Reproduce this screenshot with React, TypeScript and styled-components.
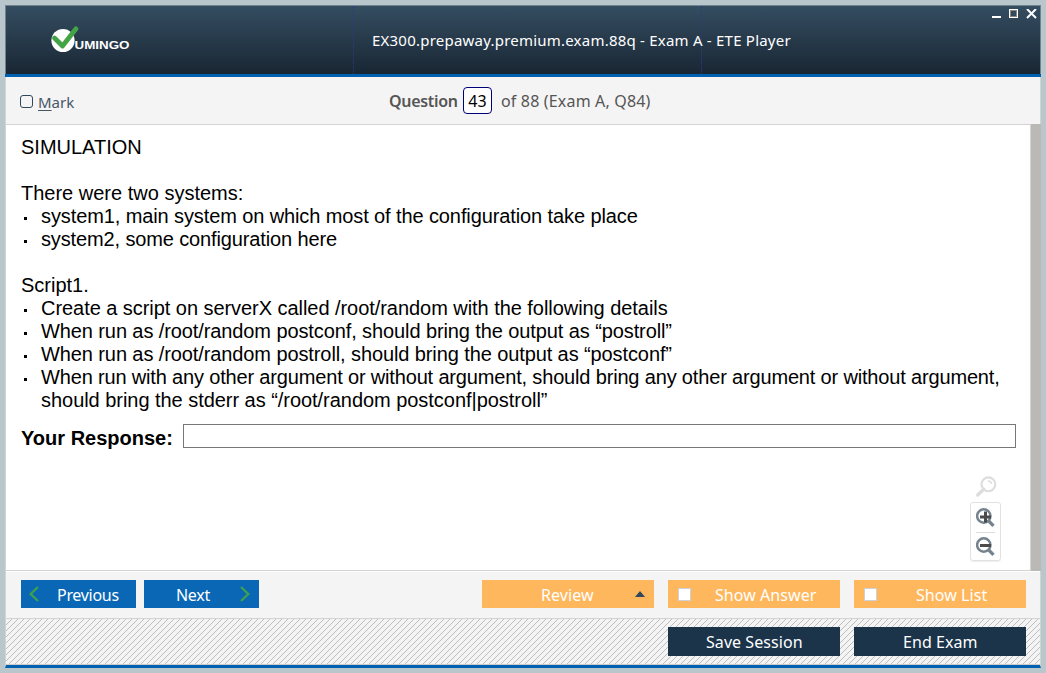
import React from "react";
import styled, { createGlobalStyle } from "styled-components";

const GlobalStyle = createGlobalStyle`
  * { box-sizing: border-box; }
  body { margin: 0; overflow: hidden; background: #b9c6cc; }
`;

const ui = `"Noto Sans", "Open Sans", sans-serif`;
const hatch = `url("data:image/svg+xml,%3Csvg xmlns='http://www.w3.org/2000/svg' width='6' height='6' shape-rendering='crispEdges'%3E%3Cpath fill='%23bdbdbd' d='M0 5h1v1H0zM1 4h1v1H1zM2 3h1v1H2zM3 2h1v1H3zM4 1h1v1H4zM5 0h1v1H5z'/%3E%3C/svg%3E")`;

const Desktop = styled.div`
  width: 1046px;
  height: 673px;
  padding: 5px;
  background: #b9c6cc;
`;
const Window = styled.main`
  width: 1036px;
  height: 663px;
  display: flex;
  flex-direction: column;
  & > * { flex: none; }
`;
const Header = styled.header`
  height: 72px;
  display: grid;
  grid-template-columns: 349px 348px 1fr;
  border-bottom: 3px solid #0061b1;
  background: linear-gradient(#354e61, #192634);
  box-shadow: inset 1px 1px #71838b, inset -1px 0 #71838b;
`;
const Brand = styled.div`
  margin-top: 1px;
  padding: 19px 0 0 46px;
  border-right: 1px dotted #2a3b85;
`;
const TitleCell = styled.div`
  margin-top: 1px;
  padding: 23px 0 0 18px;
  border-right: 1px dotted #2a3b85;
`;
const Title = styled.h1`
  margin: 0;
  white-space: nowrap;
  color: #fff;
  font: 400 15px/22px ${ui};
  letter-spacing: 0.22px;
`;
const Controls = styled.div`
  display: flex;
  justify-content: flex-end;
  padding: 4px 4px 0 0;
`;
const MarkBar = styled.section`
  height: 48px;
  display: flex;
  align-items: flex-start;
  padding: 10px 14px 0;
  border: solid #d3d3d3;
  border-width: 0 1px 1px;
  background: #f4f4f4;
  color: #555;
  font: 400 16px/28px ${ui};
`;
const MarkLabel = styled.label`
  width: 369px;
  display: flex;
  align-items: flex-start;
  color: #455767;
  font-size: 15px;
  line-height: 30px;
  u { text-underline-offset: 2px; }
`;
const RoundBox = styled.span`
  width: 13px;
  height: 13px;
  margin: 8px 5px 0 0;
  border: 1px solid #30485b;
  border-radius: 3px;
`;
const QuestionWord = styled.strong`
  width: 74px;
  font-weight: 600;
  letter-spacing: -0.3px;
`;
const QuestionNumber = styled.span`
  width: 29px;
  height: 27px;
  margin-right: 9px;
  border: 1px solid #000078;
  border-radius: 4px;
  background: #fff;
  color: #000;
  text-align: center;
  line-height: 27px;
`;
const Total = styled.span`
  white-space: nowrap;
  letter-spacing: 0.17px;
`;
const Viewport = styled.section`
  height: 446px;
  display: flex;
  border-left: 1px solid #d3d3d3;
  border-bottom: 1px solid #d3d3d3;
  background: #fff;
`;
const Document = styled.article`
  flex: 1;
  min-width: 0;
  padding: 11px 14px 0 15px;
  color: #000;
  font: 20px/23px "Liberation Sans", Arial, sans-serif;
`;
const Scrollbar = styled.div`
  flex: none;
  width: 11px;
  height: 447px;
  margin-top: -1px;
  border-left: 1px solid #d3d3d3;
  background: #bbb9b5;
`;
const Paragraph = styled.p<{ $gap?: boolean }>`
  margin: 0 0 ${(p) => (p.$gap ? 23 : 0)}px;
`;
const Bullets = styled.ul<{ $gap?: boolean }>`
  margin: 0 0 ${(p) => (p.$gap ? 23 : 0)}px;
  padding: 0;
  list-style: none;
`;
const Bullet = styled.li<{ $spacing?: number }>`
  display: flex;
  white-space: nowrap;
  letter-spacing: ${(p) => p.$spacing ?? 0}px;
  &::before {
    content: "";
    flex: none;
    width: 3px;
    height: 3px;
    margin: 12px 14px 0 3px;
    background: #000;
  }
`;
const LastLine = styled.span`
  display: block;
  letter-spacing: -0.04px;
`;
const Response = styled.label`
  display: flex;
  align-items: flex-start;
  margin-top: 12px;
  strong { width: 162px; padding-top: 3px; white-space: nowrap; }
`;
const Field = styled.input`
  flex: 1;
  height: 24px;
  border: 1px solid #777;
  border-radius: 0;
  background: #fff;
`;
const ZoomTools = styled.div`
  width: 31px;
  margin: 26px 15px 0 auto;
  display: flex;
  flex-direction: column;
  align-items: center;
  svg { display: block; }
`;
const ZoomPanel = styled.div`
  width: 31px;
  height: 59px;
  margin-top: 4px;
  padding: 5px 5px 0;
  border: 1px solid #e2e2e2;
  border-radius: 3px;
  box-shadow: 0 1px 1px #eee;
`;
const ZoomRow = styled.div`
  height: 24px;
  & + & { height: 28px; padding-top: 4px; border-top: 1px solid #ddd; }
`;
const NavBar = styled.nav`
  height: 48px;
  display: flex;
  justify-content: space-between;
  padding: 9px 14px 0 15px;
  border: solid #d3d3d3;
  border-width: 0 1px 1px;
  background: #f4f4f4;
  box-shadow: inset 0 1px #fff;
`;
const Button = styled.button<{ $tone: "blue" | "orange" | "navy" }>`
  width: ${(p) => (p.$tone === "blue" ? 115 : 172)}px;
  height: ${(p) => (p.$tone === "navy" ? 29 : 28)}px;
  display: flex;
  align-items: center;
  padding: 0;
  border: 0;
  background: ${(p) => ({ blue: "#0967b6", orange: "#ffb75d", navy: "#1b344a" })[p.$tone]};
  color: #fff;
  font: 400 16px/${(p) => (p.$tone === "navy" ? 27 : 28)}px ${ui};
  letter-spacing: ${(p) => (p.$tone === "blue" ? -0.3 : 0.06)}px;
`;
const Caption = styled.span<{ $start: number }>`
  margin-left: ${(p) => p.$start}px;
  flex: 1;
  text-align: left;
  white-space: nowrap;
  padding-top: 1px;
`;
const Group = styled.div<{ $gap: number }>`
  display: flex;
  align-items: flex-start;
  gap: ${(p) => p.$gap}px;
`;
const SquareBox = styled.span`
  width: 13px;
  height: 13px;
  margin-left: 10px;
  border: 1px solid #d0d0d8;
  background: #fff;
`;
const Footer = styled.footer`
  height: 49px;
  display: flex;
  justify-content: flex-end;
  align-items: flex-start;
  padding: 8px 14px 0;
  border: solid #d3d3d3;
  border-width: 0 1px;
  border-bottom: 3px solid #0061b1;
  background: ${hatch} #f4f4f4;
  box-shadow: inset 0 -1px #ccc;
`;
const IconSlot = styled.span<{ $left?: number; $right?: number }>`
  display: flex;
  margin-left: ${(p) => p.$left ?? 0}px;
  margin-right: ${(p) => p.$right ?? 0}px;
`;
const LogoWord = styled.text`
  font: 700 11px "Liberation Sans", sans-serif;
  fill: #fff;
`;

const Logo = () => (
  <svg width="82" height="30" viewBox="0 0 82 30">
    <circle cx="12" cy="15.5" r="11.6" fill="#fff" />
    <path d="M3.5 13 11.5 21 25 3.8" fill="none" stroke="#43a447" strokeWidth="4.8" strokeLinecap="round" strokeLinejoin="round" />
    <LogoWord x="23.5" y="24" textLength="55" lengthAdjust="spacingAndGlyphs">UMINGO</LogoWord>
  </svg>
);
const WindowIcons = () => (
  <svg width="48" height="12" viewBox="0 0 48 12" shapeRendering="crispEdges">
    <path d="M3 7h9v2H3z" fill="#fff" />
    <path d="M20.5.5h8v8h-8z" fill="none" stroke="#fff" />
    <path d="M21.5 1.5h6v6h-6z" fill="none" stroke="#8b8580" />
    <path d="m38 0 9 9M47 0l-9 9" fill="none" stroke="#fff" strokeWidth="2" shapeRendering="auto" />
  </svg>
);
const Magnifier = () => (
  <svg width="22" height="22" viewBox="0 0 22 22" fill="none" stroke="#ddd">
    <circle cx="13.4" cy="8.3" r="6.9" strokeWidth="2.1" />
    <path d="m8.7 13.2-6 5.8" strokeWidth="3.4" strokeLinecap="round" />
    <path d="M13 5c2 0 3.5 1.3 3.7 3" strokeWidth="1.3" />
  </svg>
);
const ZoomGlyph = ({ plus }: { plus?: boolean }) => (
  <svg width="20" height="20" viewBox="0 0 20 20" fill="none">
    <circle cx="7.8" cy="8" r="6.7" stroke="#75838f" strokeWidth="2.5" />
    <path d="m12.7 13 4.8 4.8" stroke="#75838f" strokeWidth="3.3" />
    <path d={plus ? "M4 9h11M9.5 3.5v11" : "M4 8.5h11"} stroke="#4b4b4b" strokeWidth="3" />
  </svg>
);
const Chevron = ({ right }: { right?: boolean }) => (
  <svg width="10" height="16" viewBox="0 0 10 16" fill="none" stroke="#3fa14c" strokeWidth="2.3">
    <path d={right ? "m1 1 7.3 7L1 15" : "M9 1 1.7 8 9 15"} />
  </svg>
);
const UpArrow = () => (
  <svg width="10" height="6" viewBox="0 0 10 6">
    <path d="M5 0 10 6H0z" fill="#30485b" />
  </svg>
);

export default function App() {
  return (
    <Desktop>
      <GlobalStyle />
      <Window>
        <Header>
          <Brand><Logo /></Brand>
          <TitleCell><Title>EX300.prepaway.premium.exam.88q - Exam A - ETE Player</Title></TitleCell>
          <Controls><WindowIcons /></Controls>
        </Header>
        <MarkBar>
          <MarkLabel><RoundBox /><span><u>M</u>ark</span></MarkLabel>
          <QuestionWord>Question</QuestionWord>
          <QuestionNumber>43</QuestionNumber>
          <Total>of 88 (Exam A, Q84)</Total>
        </MarkBar>
        <Viewport>
          <Document>
            <Paragraph $gap>SIMULATION</Paragraph>
            <Paragraph>There were two systems:</Paragraph>
            <Bullets $gap>
              <Bullet $spacing={-0.105}>system1, main system on which most of the configuration take place</Bullet>
              <Bullet $spacing={-0.13}>system2, some configuration here</Bullet>
            </Bullets>
            <Paragraph>Script1.</Paragraph>
            <Bullets>
              <Bullet $spacing={-0.05}>Create a script on serverX called /root/random with the following details</Bullet>
              <Bullet $spacing={-0.1}>When run as /root/random postconf, should bring the output as “postroll”</Bullet>
              <Bullet $spacing={-0.1}>When run as /root/random postroll, should bring the output as “postconf”</Bullet>
              <Bullet $spacing={-0.165}>
                <span>
                  When run with any other argument or without argument, should bring any other argument or without argument,
                  <LastLine>should bring the stderr as “/root/random postconf|postroll”</LastLine>
                </span>
              </Bullet>
            </Bullets>
            <Response><strong>Your Response:</strong><Field aria-label="Your Response" /></Response>
            <ZoomTools>
              <Magnifier />
              <ZoomPanel>
                <ZoomRow><ZoomGlyph plus /></ZoomRow>
                <ZoomRow><ZoomGlyph /></ZoomRow>
              </ZoomPanel>
            </ZoomTools>
          </Document>
          <Scrollbar />
        </Viewport>
        <NavBar>
          <Group $gap={8}>
            <Button $tone="blue"><IconSlot $left={8}><Chevron /></IconSlot><Caption $start={18}>Previous</Caption></Button>
            <Button $tone="blue"><Caption $start={32}>Next</Caption><IconSlot $right={9}><Chevron right /></IconSlot></Button>
          </Group>
          <Group $gap={14}>
            <Button $tone="orange"><Caption $start={59}>Review</Caption><IconSlot $right={9}><UpArrow /></IconSlot></Button>
            <Button $tone="orange"><SquareBox /><Caption $start={24}>Show Answer</Caption></Button>
            <Button $tone="orange"><SquareBox /><Caption $start={39}>Show List</Caption></Button>
          </Group>
        </NavBar>
        <Footer>
          <Group $gap={14}>
            <Button $tone="navy"><Caption $start={38}>Save Session</Caption></Button>
            <Button $tone="navy"><Caption $start={49}>End Exam</Caption></Button>
          </Group>
        </Footer>
      </Window>
    </Desktop>
  );
}
